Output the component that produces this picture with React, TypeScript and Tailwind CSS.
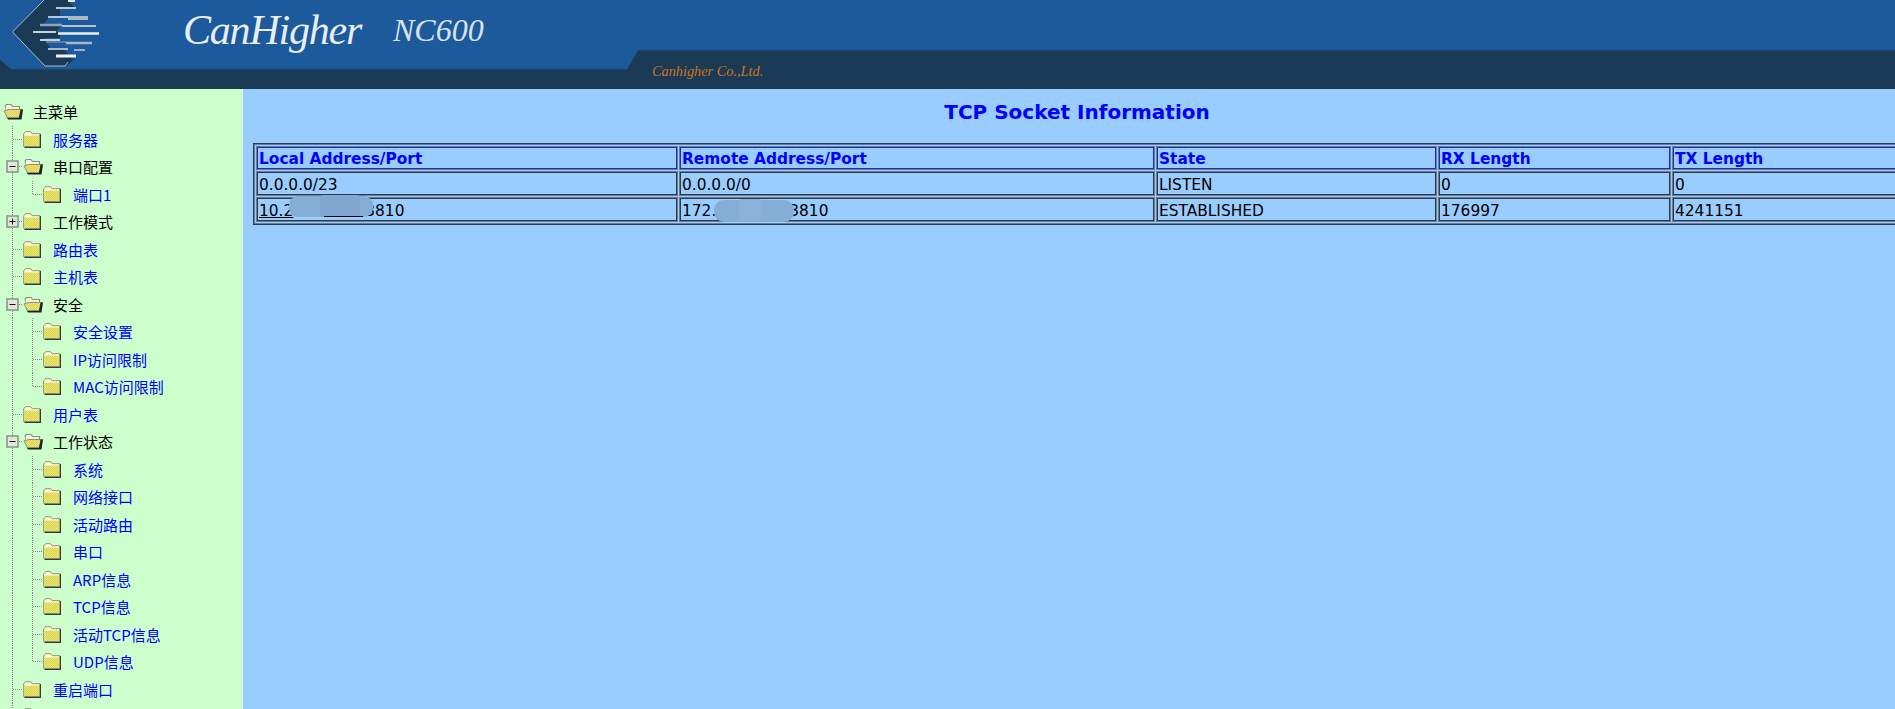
import React from "react";

type Node = { label: string; level: 0 | 1 | 2; link?: boolean; open?: boolean; box?: "plus" | "minus"; first?: boolean; last?: boolean };

const tree: Node[] = [
  { label: "主菜单", level: 0, open: true },
  { label: "服务器", level: 1, link: true },
  { label: "串口配置", level: 1, open: true, box: "minus" },
  { label: "端口1", level: 2, link: true, first: true, last: true },
  { label: "工作模式", level: 1, box: "plus" },
  { label: "路由表", level: 1, link: true },
  { label: "主机表", level: 1, link: true },
  { label: "安全", level: 1, open: true, box: "minus" },
  { label: "安全设置", level: 2, link: true, first: true },
  { label: "IP访问限制", level: 2, link: true },
  { label: "MAC访问限制", level: 2, link: true, last: true },
  { label: "用户表", level: 1, link: true },
  { label: "工作状态", level: 1, open: true, box: "minus" },
  { label: "系统", level: 2, link: true, first: true },
  { label: "网络接口", level: 2, link: true },
  { label: "活动路由", level: 2, link: true },
  { label: "串口", level: 2, link: true },
  { label: "ARP信息", level: 2, link: true },
  { label: "TCP信息", level: 2, link: true },
  { label: "活动TCP信息", level: 2, link: true },
  { label: "UDP信息", level: 2, link: true, last: true },
  { label: "重启端口", level: 1, link: true },
  { label: "", level: 1 },
];

function Folder({ x, open }: { x: number; open?: boolean }) {
  if (open) {
    return (
      <g transform={`translate(${x} 5)`}>
        <path d="M1.5 3 L3 1 H8 L10 3 H17 V6 H19.5 L17.5 16 H4 Z" fill="#8a8a80" />
        <path d="M2.5 4 L3.5 2 H7.5 L9.5 4 H16 V6 H5.5 L3 10 Z" fill="#f4f2d8" />
        <path d="M1 8 L5.5 6.5 H19 L16 14.5 H4.5 Z" fill="url(#dither)" stroke="#8e8e84" strokeWidth="1" />
        <path d="M17.5 6.5 L20 6.5 L18.5 16.5 H5 L4.5 15 H16 Z" fill="#222" />
      </g>
    );
  }
  return (
    <g transform={`translate(${x} 5)`}>
      <path d="M0.5 3 L2.5 0.5 H7.5 L9.5 2.5 H17 V15.5 H0.5 Z" fill="url(#dither)" stroke="#a0a096" strokeWidth="1" />
      <path d="M1.5 3 L3 1.5 H7 L9 3.5 H16 V4.4 H1.5 Z" fill="#fbfaf0" />
      <path d="M18 3 V17 H1.5 V15.7 H16.8 V3 Z" fill="#3a3a34" />
    </g>
  );
}

function Guide({ node }: { node: Node }) {
  const width = node.level === 0 ? 33 : node.level === 1 ? 53 : 73;
  const dots = { stroke: "#888888", strokeWidth: 1, strokeDasharray: "1 1", fill: "none", shapeRendering: "crispEdges" as const };
  return (
    <svg width={width} height="28" viewBox={`0 0 ${width} 28`} className="shrink-0 block overflow-visible">
      {node.level > 0 && <line x1="12.5" y1="0" x2="12.5" y2="28" {...dots} />}
      {node.level === 1 && <line x1="12.5" y1="13.5" x2="23" y2="13.5" {...dots} />}
      {node.level === 2 && (
        <>
          <line x1="32.5" y1="0" x2="32.5" y2={node.last ? 13.5 : 28} {...dots} />
          <line x1="32.5" y1="13.5" x2="43" y2="13.5" {...dots} />
        </>
      )}
      {node.box && (
        <g>
          <rect x="7" y="8" width="11" height="11" fill="#dfe8d8" stroke="#8a9088" strokeWidth="1.5" />
          <line x1="9.5" y1="13.5" x2="15.5" y2="13.5" stroke="#111" strokeWidth="1" />
          {node.box === "plus" && <line x1="12.5" y1="10.5" x2="12.5" y2="16.5" stroke="#111" strokeWidth="1" />}
        </g>
      )}
      <Folder x={node.level === 0 ? 3 : node.level === 1 ? 23 : 43} open={node.open} />
    </svg>
  );
}

function Logo() {
  const stripes: [number, number, number, string, number][] = [
    [1, 68, 75, "#dfe6ee", 2],
    [8, 56, 76, "#b9c6d4", 2],
    [17, 48, 70, "#e6ecf2", 1.5],
    [18, 68, 88, "#aab8c6", 4],
    [25, 40, 62, "#8fa4ba", 2.5],
    [26, 62, 96, "#b4c2d0", 2],
    [32, 33, 56, "#c4d0dc", 2],
    [33.5, 58, 99, "#e8eef4", 2.5],
    [40, 40, 60, "#c4d0dc", 2],
    [43, 66, 92, "#a8b8c8", 2.5],
    [42, 46, 66, "#5d7d9c", 2],
    [49, 48, 68, "#a8b8c8", 2],
    [50, 74, 85, "#c4d0dc", 1.5],
    [56, 56, 76, "#f2f5f8", 3],
  ];
  return (
    <svg width="110" height="70" viewBox="0 0 110 70" className="block">
      <path
        d="M44 0 H68 L75 8 H60 V16 H50 L44 24 H62 L56 32 H60 V38 H44 L50 48 H62 L70 56 L74 60 L66 66 H45 L12.5 32 Z"
        fill="#1a3a56"
      />
      <path d="M44 0 L12.5 32 L45 66 H65 L68 62" fill="none" stroke="#a9bbcd" strokeWidth="1" />
      {stripes.map(([y, a, b, c, h], i) => (
        <rect key={i} x={a} y={y - h / 2} width={b - a} height={h} fill={c} />
      ))}
    </svg>
  );
}

function Cell({ head, className, children }: { head?: boolean; className?: string; children: React.ReactNode }) {
  return (
    <td
      className={`p-0 pl-[1px] pt-[2px] align-middle whitespace-nowrap border ${
        head ? "h-[22px] border-[#1c2fb4] font-bold text-[#0000ff]" : "h-[23px] border-[#2f3a46] text-black"
      } shadow-[0_0_0_1px_#6a7d94] ${className ?? ""}`}
    >
      {children}
    </td>
  );
}

export default function App() {
  return (
    <div className="h-[709px] w-[1895px] overflow-hidden flex flex-col font-['DejaVu_Sans',sans-serif]">
      <header className="relative h-[89px] shrink-0 bg-[#1c5a9c] overflow-hidden">
        <svg width="1895" height="89" viewBox="0 0 1895 89" className="block">
          <path d="M0 60 L11 69 H627 L638 50 H1895 V89 H0 Z" fill="#1a3a56" />
          <path d="M11 69 H627 L638 50 H1895" fill="none" stroke="#1f4f82" strokeWidth="1" />
        </svg>
        <span className="absolute left-0 top-0">
          <Logo />
        </span>
        <span className="absolute left-[183px] top-[6px] text-[42px] leading-[48px] tracking-[-1.2px] italic text-[#e8eef5] font-['Liberation_Serif',serif]">
          CanHigher
        </span>
        <span className="absolute left-[393px] top-[11px] text-[32px] leading-[38px] italic text-[#d8e2ed] font-['Liberation_Serif',serif]">
          NC600
        </span>
        <span className="absolute left-[652px] top-[62px] text-[14.3px] leading-[18px] italic text-[#d0741c] font-['Liberation_Serif',serif]">
          Canhigher Co.,Ltd.
        </span>
      </header>
      <div className="flex flex-1 min-h-0">
        <aside className="w-[243px] shrink-0 bg-[#ccffcc] pt-[9.5px] overflow-hidden font-['Noto_Sans_CJK_SC',sans-serif] text-[15px]">
          <svg width="0" height="0" className="block">
            <defs>
              <pattern id="dither" width="2" height="2" patternUnits="userSpaceOnUse">
                <rect width="2" height="2" fill="#efe76a" />
                <rect width="1" height="1" fill="#d4d45c" />
                <rect x="1" y="1" width="1" height="1" fill="#d4d45c" />
              </pattern>
            </defs>
          </svg>
          {tree.map((n, i) => (
            <div key={i} className="h-[27.5px] flex items-center">
              <Guide node={n} />
              <span className={`whitespace-nowrap leading-[20px] ${n.link ? "text-[#0000ff]" : "text-black"}`}>{n.label}</span>
            </div>
          ))}
        </aside>
        <main className="flex-1 min-w-0 bg-[#99ccff] overflow-hidden">
          <div className="w-[1668px] px-[10px]">
            <h2 className="text-center text-[#0000ff] font-bold text-[20px] leading-[24px] mt-[11px] mb-[19px]">TCP Socket Information</h2>
            <table className="table-fixed border-separate border-spacing-[3px] w-[1648px] border border-[#2f3a46] shadow-[inset_0_0_0_1px_#6a7d94] text-[15.4px] leading-[18px]">
              <colgroup>
                <col className="w-[420px]" />
                <col className="w-[474px]" />
                <col className="w-[279px]" />
                <col className="w-[231px]" />
                <col />
              </colgroup>
              <tbody>
                <tr>
                  <Cell head>Local Address/Port</Cell>
                  <Cell head>Remote Address/Port</Cell>
                  <Cell head>State</Cell>
                  <Cell head>RX Length</Cell>
                  <Cell head>TX Length</Cell>
                </tr>
                <tr>
                  <Cell>0.0.0.0/23</Cell>
                  <Cell>0.0.0.0/0</Cell>
                  <Cell>LISTEN</Cell>
                  <Cell>0</Cell>
                  <Cell>0</Cell>
                </tr>
                <tr>
                  <Cell className="relative">
                    <span className="underline">10.2</span>
                    <span className="inline-block w-[72px]" />
                    <span>3810</span>
                    <span className="absolute left-[31px] top-[-3px] w-[84px] h-[21px] rounded-[9px] bg-[#85aed6]" />
                    <span className="absolute left-[62px] top-[-4px] w-[40px] h-[22px] rounded-[3px] bg-[#7fa7cf]" />
                    <span className="absolute left-[66px] top-[17px] w-[39px] h-px bg-black" />
                  </Cell>
                  <Cell className="relative">
                    <span>172.</span>
                    <span className="inline-block w-[73px]" />
                    <span>3810</span>
                    <span className="absolute left-[33px] top-[1px] w-[80px] h-[22px] rounded-[10px] bg-[#85aed6]" />
                    <span className="absolute left-[58px] top-0 w-[22px] h-[23px] rounded-[3px] bg-[#8ab1d8]" />
                  </Cell>
                  <Cell>ESTABLISHED</Cell>
                  <Cell>176997</Cell>
                  <Cell>4241151</Cell>
                </tr>
              </tbody>
            </table>
          </div>
        </main>
      </div>
    </div>
  );
}
